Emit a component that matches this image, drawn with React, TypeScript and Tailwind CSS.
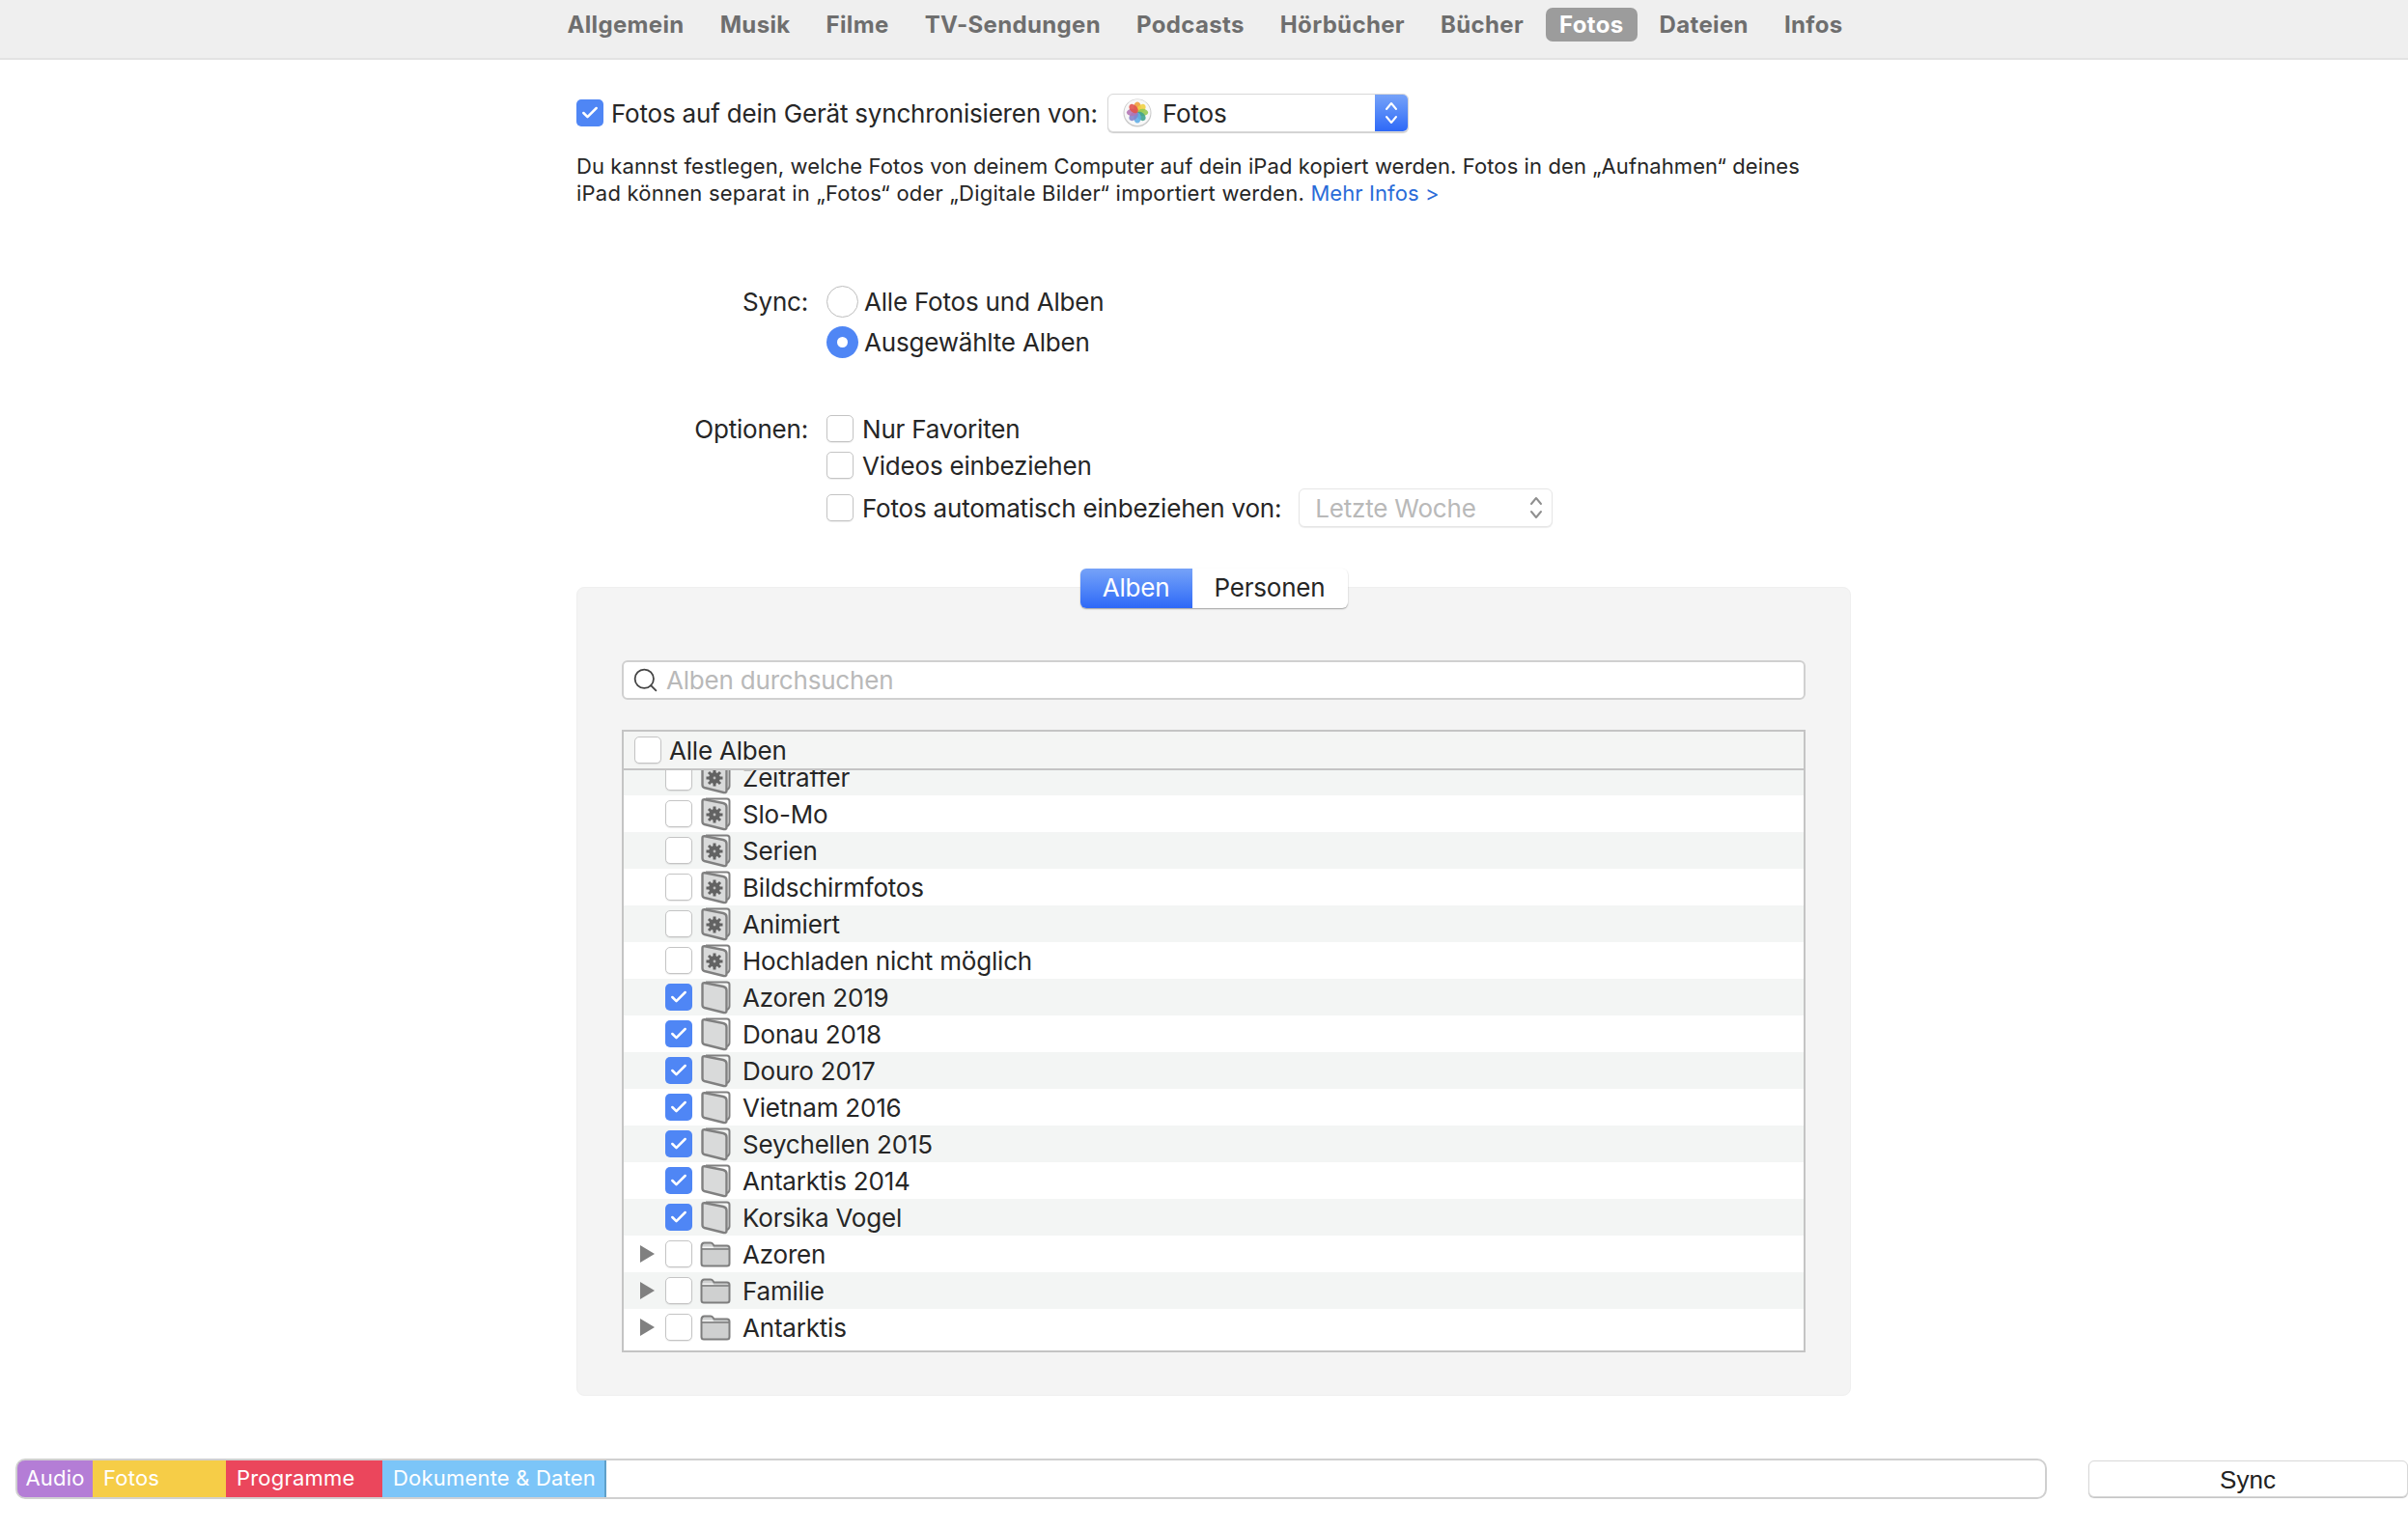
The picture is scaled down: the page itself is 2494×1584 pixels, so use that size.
import { Check, Search } from "lucide-react";

const tabs = ["Allgemein", "Musik", "Filme", "TV-Sendungen", "Podcasts", "Hörbücher", "Bücher", "Fotos", "Dateien", "Infos"];

type Row = { name: string; kind: "smart" | "album" | "folder"; checked?: boolean };

const rows: Row[] = [
  { name: "Zeitraffer", kind: "smart" },
  { name: "Slo-Mo", kind: "smart" },
  { name: "Serien", kind: "smart" },
  { name: "Bildschirmfotos", kind: "smart" },
  { name: "Animiert", kind: "smart" },
  { name: "Hochladen nicht möglich", kind: "smart" },
  { name: "Azoren 2019", kind: "album", checked: true },
  { name: "Donau 2018", kind: "album", checked: true },
  { name: "Douro 2017", kind: "album", checked: true },
  { name: "Vietnam 2016", kind: "album", checked: true },
  { name: "Seychellen 2015", kind: "album", checked: true },
  { name: "Antarktis 2014", kind: "album", checked: true },
  { name: "Korsika Vogel", kind: "album", checked: true },
  { name: "Azoren", kind: "folder" },
  { name: "Familie", kind: "folder" },
  { name: "Antarktis", kind: "folder" },
];

const CheckBox = ({ checked }: { checked?: boolean }) =>
  checked ? (
    <span className="flex h-7 w-7 shrink-0 items-center justify-center rounded-[5px] bg-[#4f86f5]">
      <Check className="h-[20px] w-[20px] text-white" strokeWidth={3} />
    </span>
  ) : (
    <span className="h-7 w-7 shrink-0 rounded-[5px] border border-[#c4c4c4] bg-white shadow-[0_1px_1px_rgba(0,0,0,0.08)]" />
  );

const Radio = ({ checked }: { checked?: boolean }) =>
  checked ? (
    <span className="flex h-[33px] w-[33px] shrink-0 items-center justify-center rounded-full bg-[#4f86f5]">
      <span className="h-[11px] w-[11px] rounded-full bg-white" />
    </span>
  ) : (
    <span className="h-[33px] w-[33px] shrink-0 rounded-full border border-[#bdbdbd] bg-white" />
  );

const Chevrons = ({ color }: { color: string }) => (
  <svg width="14" height="28" viewBox="0 0 14 28" fill="none" stroke={color} strokeWidth="2" strokeLinecap="round" strokeLinejoin="round">
    <path d="M2 10 L7 4 L12 10" />
    <path d="M2 18 L7 24 L12 18" />
  </svg>
);

const PhotosIcon = () => {
  // clockwise from the top petal
  const colors = ["#f0a03c", "#f0d044", "#93c952", "#3fa38f", "#62aee6", "#8583cc", "#b274b4", "#e0544f"];
  return (
    <svg width="30" height="30" viewBox="0 0 30 30">
      <circle cx="15" cy="15" r="14.5" fill="#c9c9c9" />
      <circle cx="15" cy="14.5" r="13.5" fill="#f8f8f8" />
      {colors.map((c, i) => (
        <ellipse key={c} cx="15" cy="9" rx="3.7" ry="5.6" fill={c} opacity="0.9" transform={`rotate(${i * 45} 15 14.5)`} />
      ))}
    </svg>
  );
};

const AlbumIcon = ({ gear }: { gear?: boolean }) => (
  <svg width="31" height="35" viewBox="0 0 31 35" className="shrink-0">
    <path d="M5 1.5 L27 1.5 Q29.5 1.5 29.5 4 L29.5 26 Q29.5 29 27 30" fill="none" stroke="#808080" strokeWidth="2" />
    <path d="M1.5 4 Q1.5 2 4 2.3 L23 6 Q26.5 6.8 26.5 10 L26.5 31 Q26.5 33.5 23.5 33 L3.5 28 Q1.5 27.4 1.5 25 Z" fill="#d9dada" stroke="#808080" strokeWidth="2.4" />
    {gear && (
      <g fill="#626262" stroke="#626262">
        <circle cx="14" cy="18" r="5.4" />
        {[0, 45, 90, 135].map((a) => (
          <path key={a} d="M14 9.5 V26.5" strokeWidth="3" transform={`rotate(${a} 14 18)`} />
        ))}
        <circle cx="14" cy="18" r="1.4" fill="#bdbdbd" stroke="none" />
      </g>
    )}
  </svg>
);

const FolderIcon = () => (
  <svg width="32" height="27" viewBox="0 0 32 27" className="shrink-0">
    <path d="M1.5 5 Q1.5 1.5 4.5 1.5 L11 1.5 Q12.5 1.5 13.5 3 L14.5 4.5 L28 4.5 Q30.5 4.5 30.5 7 L30.5 23 Q30.5 25.5 28 25.5 L4 25.5 Q1.5 25.5 1.5 23 Z" fill="#cfd0d0" stroke="#7e7e7e" strokeWidth="2" />
    <path d="M2 8 H30" stroke="#7e7e7e" strokeWidth="1.6" />
    <path d="M2.5 5.5 H13 L14.5 7 H2.5 Z" fill="#f4f4f4" />
  </svg>
);

const AlbumRow = ({ row, odd }: { row: Row; odd: boolean }) => (
  <div className={`flex h-[38px] items-center ${odd ? "bg-white" : "bg-[#f3f5f4]"}`}>
    <span className="flex w-[43px] justify-end pr-[11px]">
      {row.kind === "folder" && <span className="h-0 w-0 border-y-[9px] border-l-[15px] border-y-transparent border-l-[#808080]" />}
    </span>
    <CheckBox checked={row.checked} />
    <span className="ml-[8px] flex w-[32px] justify-center">
      {row.kind === "folder" ? <FolderIcon /> : <AlbumIcon gear={row.kind === "smart"} />}
    </span>
    <span className="ml-[12px] text-[26px] text-[#262626]">{row.name}</span>
  </div>
);

const App = () => {
  return (
    <div className="flex h-[1584px] w-[2494px] flex-col overflow-hidden bg-white font-['Inter',sans-serif] text-[26px] tracking-[-0.2px] text-[#262626]">
      {/* Tabs */}
      <header className="flex h-[62px] shrink-0 items-start justify-center gap-[9px] border-b-2 border-[#e3e3e3] bg-[#efefef] pt-[8px] pl-[2px]">
        {tabs.map((tab) => (
          <span
            key={tab}
            className={`flex h-[35px] items-center rounded-[7px] px-[14px] text-[24px] font-bold tracking-[0.35px] ${
              tab === "Fotos" ? "bg-[#9c9c9c] text-white" : "text-[#6e6e6e]"
            }`}
          >
            {tab}
          </span>
        ))}
      </header>

      <main className="ml-[597px] flex w-[1320px] flex-col">
        {/* Sync source */}
        <div className="mt-[35px] flex h-[40px] items-center">
          <CheckBox checked />
          <span className="ml-[8px]">Fotos auf dein Gerät synchronisieren von:</span>
          <div className="ml-auto mr-[458px] flex h-[40px] w-[312px] overflow-hidden rounded-[6px] border border-[#d8d8d8] bg-white shadow-[0_1px_1px_rgba(0,0,0,0.2)]">
            <div className="flex flex-1 items-center gap-[11px] pl-[15px]">
              <PhotosIcon />
              <span>Fotos</span>
            </div>
            <div className="flex w-[34px] items-center justify-center bg-gradient-to-b from-[#76a2f8] to-[#2e68f7]">
              <Chevrons color="white" />
            </div>
          </div>
        </div>

        <p className="mt-[21px] text-[22px] leading-[28px] tracking-[0.09px]">
          Du kannst festlegen, welche Fotos von deinem Computer auf dein iPad kopiert werden. Fotos in den „Aufnahmen“ deines
          <br />
          <span className="tracking-[0.23px]">iPad können separat in „Fotos“ oder „Digitale Bilder“ importiert werden. </span>
          <span className="text-[#2a6bd8]">Mehr Infos &gt;</span>
        </p>

        {/* Sync */}
        <div className="mt-[77px] flex">
          <span className="flex h-[42px] w-[240px] items-center justify-end">Sync:</span>
          <div className="ml-[19px] flex flex-col">
            <label className="flex h-[42px] items-center gap-[6px]">
              <Radio />
              Alle Fotos und Alben
            </label>
            <label className="flex h-[42px] items-center gap-[6px]">
              <Radio checked />
              Ausgewählte Alben
            </label>
          </div>
        </div>

        {/* Optionen */}
        <div className="mt-[50px] flex">
          <span className="flex h-[38px] w-[240px] items-center justify-end">Optionen:</span>
          <div className="ml-[19px] flex flex-col">
            <label className="flex h-[38px] items-center gap-[9px]">
              <CheckBox />
              Nur Favoriten
            </label>
            <label className="flex h-[38px] items-center gap-[9px]">
              <CheckBox />
              Videos einbeziehen
            </label>
            <label className="flex h-[50px] items-center gap-[9px]">
              <CheckBox />
              Fotos automatisch einbeziehen von:
              <div className="ml-[9px] flex h-[40px] w-[263px] items-center justify-between rounded-[6px] border border-[#e6e6e6] bg-white pl-[16px] pr-[9px] text-[#b9b9b9] shadow-[0_1px_1px_rgba(0,0,0,0.08)]">
                Letzte Woche
                <Chevrons color="#8f8f8f" />
              </div>
            </label>
          </div>
        </div>

        {/* Panel */}
        <section className="mt-[57px] flex h-[838px] flex-col items-center rounded-[8px] border border-[#efefef] bg-[#f4f4f4]">
          <div className="-mt-[20px] flex h-[41px] w-[277px] overflow-hidden rounded-[6px] bg-white pb-0 shadow-[0_1px_1.5px_rgba(0,0,0,0.35)]">
            <span className="flex w-[116px] items-center justify-center bg-gradient-to-b from-[#76a2f8] to-[#2e68f7] pb-[2px] text-white">Alben</span>
            <span className="flex flex-1 items-center justify-center pb-[2px]">Personen</span>
          </div>

          <div className="mt-[54px] flex h-[41px] w-[1226px] items-center rounded-[6px] border-2 border-[#d0d0d0] bg-white pl-[8px] text-[#b9b9b9]">
            <Search className="h-[29px] w-[29px] text-[#444]" strokeWidth={1.5} />
            <span className="ml-[7px]">Alben durchsuchen</span>
          </div>

          <div className="mt-[31px] flex h-[645px] w-[1226px] flex-col border-2 border-[#c4c4c4] bg-white">
            <div className="z-10 flex h-[40px] shrink-0 items-center border-b-2 border-[#c4c4c4] bg-[#f4f5f4] pl-[11px]">
              <CheckBox />
              <span className="ml-[8px]">Alle Alben</span>
            </div>
            <div className="flex-1 overflow-hidden">
              <div className="-mt-[12px]">
                {rows.map((row, i) => (
                  <AlbumRow key={row.name} row={row} odd={i % 2 === 1} />
                ))}
              </div>
            </div>
          </div>
        </section>
      </main>

      {/* Storage bar */}
      <footer className="mt-[65px] flex items-start">
        <div className="ml-[16px] flex h-[42px] w-[2104px] overflow-hidden rounded-[10px] border-2 border-[#d0d0d0] bg-white pb-0 text-[22px] tracking-[0.2px] text-white">
          <span className="-my-[2px] -ml-[2px] flex w-[80px] items-center justify-center rounded-l-[10px] border-2 border-r-0 border-[#9560ab] bg-[#b47dd6] pb-[1px]">Audio</span>
          <span className="-my-[2px] flex w-[138px] items-center border-y-2 border-[#c9a12f] bg-[#f6cd47] pb-[1px] pl-[11px]">Fotos</span>
          <span className="-my-[2px] flex w-[162px] items-center border-y-2 border-[#bf3243] bg-[#eb465c] pb-[1px] pl-[11px]">Programme</span>
          <span className="-my-[2px] flex w-[232px] items-center border-2 border-l-0 border-[#5fa0c9] bg-[#7cc5f8] pb-[1px] pl-[11px]">Dokumente &amp; Daten</span>
        </div>
        <button className="ml-[43px] mt-[2px] h-[38px] w-[331px] rounded-[6px] border border-[#d8d8d8] bg-white pb-[3px] pr-[1px] font-['Liberation_Sans',sans-serif] text-[26px] tracking-normal text-[#222] shadow-[0_1px_1px_rgba(0,0,0,0.25)]">
          Sync
        </button>
      </footer>
    </div>
  );
};

export default App;
